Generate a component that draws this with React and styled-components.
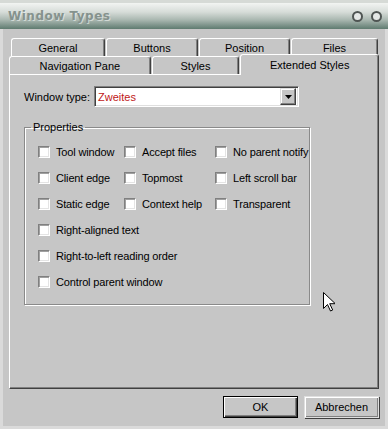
import styled, { createGlobalStyle } from "styled-components";

const Global = createGlobalStyle`
  html, body { margin: 0; padding: 0; background: #c6c6c6; }
  * { box-sizing: border-box; }
`;

const Window = styled.div`
  position: relative;
  width: 388px;
  height: 429px;
  display: flex;
  flex-direction: column;
  border-top: 3px solid #d6dad6;
  background: #c6c6c6;
  font-family: "Liberation Sans", Arial, sans-serif;
  font-size: 11px;
  color: #000;
  overflow: hidden;
`;

const TitleBar = styled.div`
  height: 26px;
  flex: none;
  display: flex;
  align-items: center;
  padding: 0 6px 0 8px;
  background: linear-gradient(#f2f4f2 0%, #d6dcd8 35%, #a9b7b0 65%, #5f7b70 100%);
`;

const Title = styled.div`
  flex: 1;
  font-family: "DejaVu Sans", Verdana, sans-serif;
  font-weight: bold;
  font-size: 12px;
  letter-spacing: 0.5px;
  color: #85928d;
  text-shadow: 1px 1px 0 rgba(255, 255, 255, 0.5);
`;

const CircleButton = styled.div`
  width: 11px;
  height: 11px;
  border-radius: 50%;
  border: 2px solid #4f5553;
  background: #e4e8e6;
  margin-left: 8px;
`;

const Frame = styled.div`
  flex: 1;
  display: flex;
  flex-direction: column;
  border: 3px solid #dadada;
  border-top: 0;
  padding: 9px 6px 0 6px;
`;

const TabRow = styled.div`
  display: flex;
  height: 18px;
  padding-left: ${(p) => p.$indent || 0}px;
  gap: ${(p) => p.$gap || 0}px;
  position: relative;
  z-index: ${(p) => (p.$front ? 2 : 1)};
`;

const Tab = styled.div`
  width: ${(p) => p.$w}px;
  height: ${(p) => (p.$active ? 21 : 18)}px;
  margin-top: ${(p) => (p.$active ? -2 : 0)}px;
  display: flex;
  align-items: center;
  justify-content: center;
  padding-top: ${(p) => (p.$active ? 0 : 1)}px;
  background: #c6c6c6;
  border-top: 1px solid #fff;
  border-left: 1px solid #fff;
  border-right: 1px solid #404040;
  box-shadow: inset -1px 0 0 #808080;
  border-radius: 3px 3px 0 0;
  white-space: nowrap;
`;

const Panel = styled.div`
  height: 315px;
  flex: none;
  padding: 11px 14px 0 14px;
  border-top: 1px solid #fff;
  border-left: 1px solid #fff;
  border-right: 1px solid #404040;
  border-bottom: 1px solid #404040;
  box-shadow: inset -1px -1px 0 #808080;
`;

const FieldRow = styled.div`
  display: flex;
  align-items: center;
  height: 21px;
`;

const Label = styled.span`
  width: 70px;
  white-space: nowrap;
`;

const Combo = styled.div`
  width: 205px;
  height: 21px;
  display: flex;
  align-items: center;
  background: #fff;
  border-top: 1px solid #808080;
  border-left: 1px solid #808080;
  border-right: 1px solid #fff;
  border-bottom: 1px solid #fff;
  box-shadow: inset 1px 1px 0 #404040, inset -1px -1px 0 #dfdfdf;
  padding: 0 2px 0 3px;
`;

const ComboText = styled.span`
  flex: 1;
  color: #c01818;
`;

const ComboButton = styled.div`
  width: 16px;
  height: 17px;
  display: flex;
  align-items: center;
  justify-content: center;
  background: #c6c6c6;
  border-top: 1px solid #dfdfdf;
  border-left: 1px solid #dfdfdf;
  border-right: 1px solid #404040;
  border-bottom: 1px solid #404040;
  box-shadow: inset -1px -1px 0 #808080, inset 1px 1px 0 #fff;
`;

const Group = styled.fieldset`
  width: 286px;
  margin: 14px 0 0 0;
  padding: 5px 0 9px 13px;
  border: 1px solid #8a8a8a;
  box-shadow: 1px 1px 0 #fff, inset 1px 1px 0 #fff;
`;

const Legend = styled.legend`
  margin-left: -7px;
  padding: 0 2px;
  line-height: 13px;
`;

const Grid = styled.div`
  display: grid;
  grid-template-columns: 86px 91px 1fr;
  grid-auto-rows: 26px;
  align-items: center;
`;

const Check = styled.label`
  display: flex;
  align-items: center;
  gap: 6px;
  white-space: nowrap;
  letter-spacing: -0.15px;
  grid-column: ${(p) => (p.$wide ? "1 / -1" : "auto")};
`;

const Box = styled.span`
  width: 12px;
  height: 12px;
  flex: none;
  background: #fff;
  border-top: 1px solid #808080;
  border-left: 1px solid #808080;
  border-right: 1px solid #fff;
  border-bottom: 1px solid #fff;
  box-shadow: inset 1px 1px 0 #a0a0a0, inset -1px -1px 0 #e4e4e4;
`;

const ButtonRow = styled.div`
  display: flex;
  justify-content: flex-end;
  gap: 6px;
  margin-top: 7px;
`;

const Button = styled.div`
  width: 75px;
  height: 22px;
  display: flex;
  align-items: center;
  justify-content: center;
  background: #c6c6c6;
  border: 1px solid ${(p) => (p.$default ? "#000" : "#dfdfdf")};
  box-shadow: ${(p) =>
    p.$default
      ? "inset 1px 1px 0 #fff, inset -1px -1px 0 #404040, inset -2px -2px 0 #808080"
      : "inset 1px 1px 0 #fff, inset -1px -1px 0 #808080, 1px 1px 0 #404040"};
  font-size: 11px;
`;

const Cursor = styled.svg`
  position: absolute;
  left: 323px;
  top: 289px;
`;

const checks = [
  ["Tool window", "Accept files", "No parent notify"],
  ["Client edge", "Topmost", "Left scroll bar"],
  ["Static edge", "Context help", "Transparent"],
];

const wide = ["Right-aligned text", "Right-to-left reading order", "Control parent window"];

export default function App() {
  return (
    <Window>
      <Global />
      <TitleBar>
        <Title>Window Types</Title>
        <CircleButton />
        <CircleButton />
      </TitleBar>
      <Frame>
        <TabRow $indent={2} $gap={1}>
          <Tab $w={94}>General</Tab>
          <Tab $w={92}>Buttons</Tab>
          <Tab $w={91}>Position</Tab>
          <Tab $w={87}>Files</Tab>
        </TabRow>
        <TabRow $front $gap={1}>
          <Tab $w={142}>Navigation Pane</Tab>
          <Tab $w={88}>Styles</Tab>
          <Tab $w={139} $active>Extended Styles</Tab>
        </TabRow>
        <Panel>
          <FieldRow>
            <Label>Window type:</Label>
            <Combo>
              <ComboText>Zweites</ComboText>
              <ComboButton>
                <svg width="7" height="4" viewBox="0 0 7 4">
                  <path d="M0 0h7L3.5 4z" fill="#000" />
                </svg>
              </ComboButton>
            </Combo>
          </FieldRow>
          <Group>
            <Legend>Properties</Legend>
            <Grid>
              {checks.flat().map((t) => (
                <Check key={t}>
                  <Box />
                  {t}
                </Check>
              ))}
              {wide.map((t) => (
                <Check key={t} $wide>
                  <Box />
                  {t}
                </Check>
              ))}
            </Grid>
          </Group>
        </Panel>
        <ButtonRow>
          <Button $default>OK</Button>
          <Button>Abbrechen</Button>
        </ButtonRow>
      </Frame>
      <Cursor width="12" height="20" viewBox="0 0 12 20">
        <path d="M0.5 0.5v16l4-4 3 6.5 2.2-1-3-6.3h5.6z" fill="#fff" stroke="#000" strokeWidth="1" />
      </Cursor>
    </Window>
  );
}
